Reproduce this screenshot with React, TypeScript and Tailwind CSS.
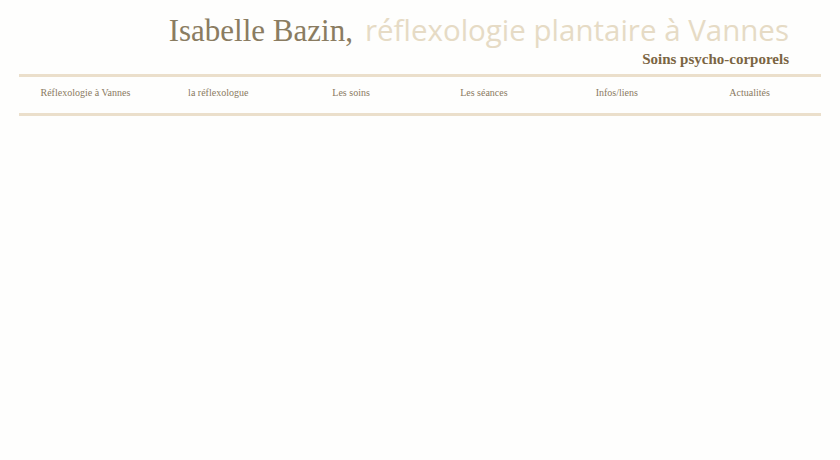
export default function App() {
  const nav = ['Réflexologie à Vannes', 'la réflexologue', 'Les soins', 'Les séances', 'Infos/liens', 'Actualités'];

  return (
    <div className="w-[840px] h-[460px] bg-[#fefefd] overflow-hidden">
      <div className="mx-[19px]">
        <header className="pr-[32px] pt-[10px] text-right">
          <h1 className="leading-[40px] whitespace-nowrap">
            <span className="text-[31px] text-[#8a7c61] font-['Liberation_Serif',serif]">Isabelle Bazin,</span>
            <span className="ml-[12px] text-[29.5px] text-[#e6dbc5] font-['Open_Sans',sans-serif]">réflexologie plantaire à Vannes</span>
          </h1>
          <p className="mt-[-5px] text-[15px] leading-[18px] font-semibold text-[#7b6543] font-['Liberation_Serif',serif]">
            Soins psycho-corporels
          </p>
        </header>
        <nav className="mt-[6px] border-y-[3px] border-[#ebdfcb]">
          <ul className="grid grid-cols-6 h-[36px] pb-[6px] pr-[5px] items-center">
            {nav.map((item) => (
              <li key={item} className="text-center text-[10px] text-[#8a7a62] font-['Liberation_Serif',serif]">
                {item}
              </li>
            ))}
          </ul>
        </nav>
      </div>
    </div>
  );
}
